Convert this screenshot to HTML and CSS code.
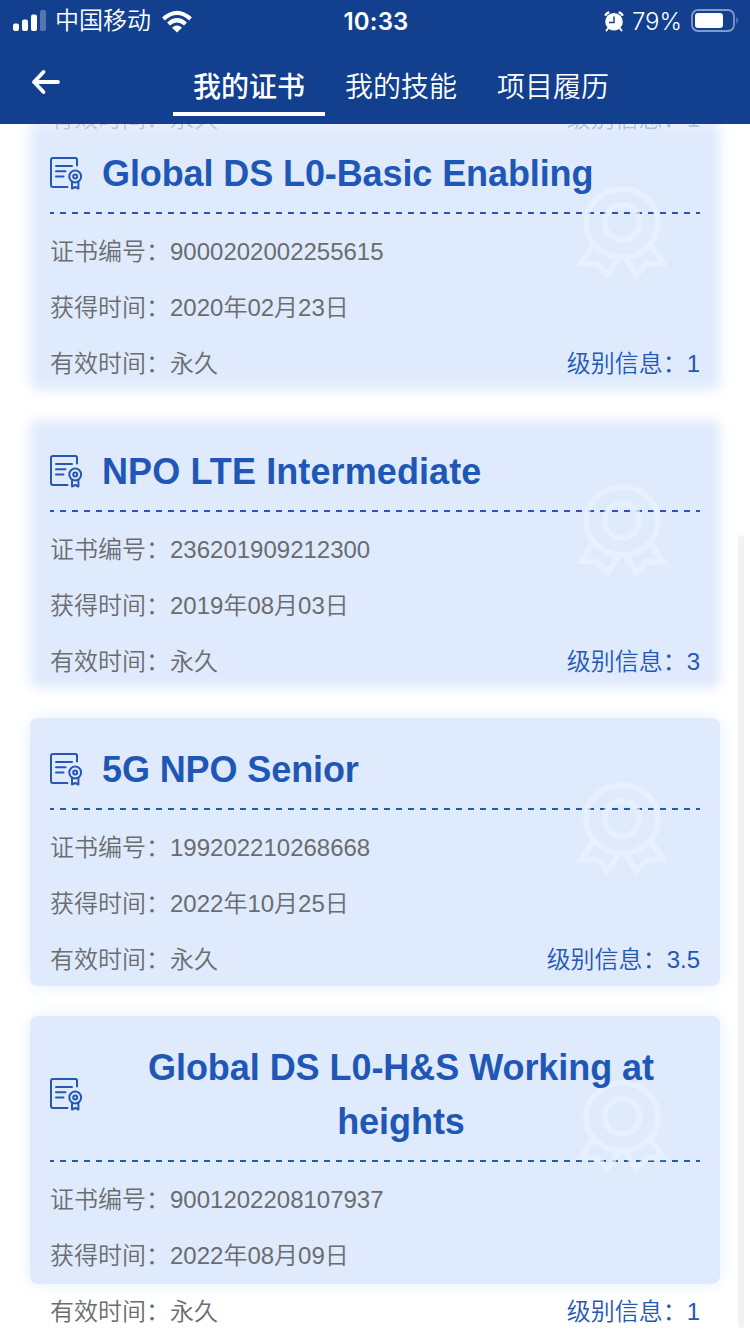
FILE: index.html
```html
<!DOCTYPE html>
<html lang="zh-CN">
<head>
<meta charset="utf-8">
<title>我的证书</title>
<link rel="stylesheet" href="styles.css">
</head>
<body>
<svg class="defs" width="0" height="0">
  <symbol id="cert" viewBox="0 0 34 34">
    <g fill="none" stroke="#2458b4" stroke-width="2" stroke-linecap="round" stroke-linejoin="round">
      <path d="M17.500 30H3Q1 30 1 28V3Q1 1 3 1H25.500Q27 1 27 2.500V8.500"/>
      <path d="M6 9H22M6 14.300H15.500M6 19.500H13.500"/>
      <circle cx="25.200" cy="19.500" r="5.900"/>
      <circle cx="25.200" cy="19.500" r="2"/>
      <path d="M22 25.500V31.500L25.200 30L28.400 31.500V25.500"/>
    </g>
  </symbol>
  <symbol id="medal" viewBox="0 0 96 96">
    <g fill="none" stroke="#eaf3ff" stroke-width="5.500">
      <ellipse cx="48" cy="37" rx="36" ry="34"/>
      <circle cx="48" cy="36.500" r="17.500"/>
      <path d="M20 58L7 77.500L23.500 78L33.500 89L46 70"/>
      <path d="M76 58L89 77.500L72.500 78L62.500 89L50 70"/>
    </g>
  </symbol>
</svg>
<header class="header">
  <div class="status">
    <div class="status-left">
      <svg width="34" height="22" viewBox="0 0 34 22"><g fill="#fff"><rect x="0" y="13.500" width="6" height="7.500" rx="2"/><rect x="9" y="9.500" width="6" height="11.500" rx="2"/><rect x="18" y="4.500" width="6" height="16.500" rx="2"/><rect x="27" y="0" width="6" height="21" rx="2" opacity=".28"/></g></svg>
      <span class="carrier">中国移动</span>
      <svg width="30" height="23" viewBox="0 0 30 23"><g fill="none" stroke="#fff" stroke-width="4.200"><path d="M1.500 9Q15-3.200 28.500 9"/><path d="M6.500 14Q15 6.500 23.500 14"/></g><path fill="#fff" d="M10 17.700Q15 13.500 20 17.700L15 22.500Z"/></svg>
    </div>
    <div class="clock">10:33</div>
    <div class="status-right">
      <svg width="20" height="21" viewBox="0 0 20 21"><circle cx="10" cy="10.800" r="8.800" fill="#fff"/><path d="M1.300 4.800Q2 2 5.300 1.300M18.700 4.800Q18 2 14.700 1.300" stroke="#fff" stroke-width="2.200" fill="none"/><path d="M4 17.500L2.500 19.500M16 17.500L17.500 19.500" stroke="#fff" stroke-width="2" stroke-linecap="round"/><path d="M10 5.500V11.500H5" fill="none" stroke="#12408f" stroke-width="1.500"/></svg>
      <span class="percent">79%</span>
      <svg width="48" height="24" viewBox="0 0 48 24"><rect x="1" y="1" width="42" height="21" rx="6" fill="none" stroke="#7f9bcb" stroke-width="1.800"/><rect x="4" y="4" width="28" height="15" rx="3" fill="#fff"/><path d="M45.500 8Q48 11.500 45.500 15Z" fill="#7f9bcb"/></svg>
    </div>
  </div>
  <nav class="nav">
    <svg class="back" width="30" height="26" viewBox="0 0 30 26"><path d="M12.500 3L3 13L12.500 23M3 13H27" fill="none" stroke="#fff" stroke-width="3.800" stroke-linecap="round" stroke-linejoin="round"/></svg>
    <div class="tabs">
      <a class="tab tab-active">我的证书</a>
      <a class="tab">我的技能</a>
      <a class="tab">项目履历</a>
    </div>
  </nav>
</header>
<main class="list">
  <div class="row row-hidden"><span>有效时间<i class="colon">：</i>永久</span><span class="level">级别信息<i class="colon">：</i>1</span></div>
  <section class="card card-soft">
    <div class="head"><svg class="cert"><use href="#cert"/></svg><h2 class="title title-tight">Global DS L0-Basic Enabling</h2></div>
    <div class="row"><span>证书编号<i class="colon">：</i>9000202002255615</span></div>
    <div class="row"><span>获得时间<i class="colon">：</i>2020年02月23日</span></div>
    <div class="row"><span>有效时间<i class="colon">：</i>永久</span><span class="level">级别信息<i class="colon">：</i>1</span></div>
    <svg class="medal"><use href="#medal"/></svg>
  </section>
  <section class="card card-soft">
    <div class="head"><svg class="cert"><use href="#cert"/></svg><h2 class="title title-loose">NPO LTE Intermediate</h2></div>
    <div class="row"><span>证书编号<i class="colon">：</i>236201909212300</span></div>
    <div class="row"><span>获得时间<i class="colon">：</i>2019年08月03日</span></div>
    <div class="row"><span>有效时间<i class="colon">：</i>永久</span><span class="level">级别信息<i class="colon">：</i>3</span></div>
    <svg class="medal"><use href="#medal"/></svg>
  </section>
  <section class="card">
    <div class="head"><svg class="cert"><use href="#cert"/></svg><h2 class="title title-tight">5G NPO Senior</h2></div>
    <div class="row"><span>证书编号<i class="colon">：</i>199202210268668</span></div>
    <div class="row"><span>获得时间<i class="colon">：</i>2022年10月25日</span></div>
    <div class="row"><span>有效时间<i class="colon">：</i>永久</span><span class="level">级别信息<i class="colon">：</i>3.5</span></div>
    <svg class="medal"><use href="#medal"/></svg>
  </section>
  <section class="card">
    <div class="head"><svg class="cert"><use href="#cert"/></svg><h2 class="title title-wrap">Global DS L0-H&amp;S Working at heights</h2></div>
    <div class="row"><span>证书编号<i class="colon">：</i>9001202208107937</span></div>
    <div class="row"><span>获得时间<i class="colon">：</i>2022年08月09日</span></div>
    <div class="row"><span>有效时间<i class="colon">：</i>永久</span><span class="level">级别信息<i class="colon">：</i>1</span></div>
    <svg class="medal"><use href="#medal"/></svg>
  </section>
  <div class="scrollbar"></div>
</main>
</body>
</html>
```
FILE: styles.css
```css
* { box-sizing: border-box; }
body {
  margin: 0;
  width: 750px;
  height: 1334px;
  overflow: hidden;
  display: flex;
  flex-direction: column;
  background: #fff;
  font-family: "Liberation Sans", "Noto Sans CJK SC", sans-serif;
  color: #6a6c70;
}
.defs { position: absolute; }
.header { height: 124px; flex: none; background: #12408f; color: #fff; }
.status {
  height: 40px;
  display: grid;
  grid-template-columns: 1fr auto 1fr;
  align-items: center;
  padding: 0 11px 0 13px;
}
.status svg { display: block; }
.status-left { display: flex; align-items: center; gap: 8px; }
.carrier { font-size: 24px; line-height: 40px; font-weight: 350; margin-right: 3px; }
.clock { font: 600 24px/40px Inter, sans-serif; letter-spacing: .2px; padding-top: 2px; }
.status-right { display: flex; align-items: center; justify-content: flex-end; gap: 9px; }
.percent { font: 350 24px/40px Inter, sans-serif; padding-top: 2px; margin: 0 0 0 -1px; }
.nav { height: 84px; display: flex; padding-left: 31px; }
.back { margin-top: 29px; }
.tabs { display: flex; margin-left: 112px; }
.tab {
  height: 76px;
  padding: 20px 20px 0;
  border-bottom: 4px solid transparent;
  font-size: 28px;
  line-height: 52px;
  padding-top: 22px;
  font-weight: 350;
}
.tab-active { border-bottom-color: #fff; font-weight: 500; }
.list {
  position: relative;
  height: 1210px;
  overflow: hidden;
  padding: 0 30px;
}
.row {
  height: 56px;
  display: flex;
  justify-content: space-between;
  font-size: 24px;
  line-height: 56px;
  font-weight: 350;
}
.row-hidden {
  position: relative;
  z-index: 1;
  margin: -33px 0 -25px;
  padding: 0 20px;
  opacity: .3;
}
.colon { font-style: normal; line-height: 1; }
.level { color: #2458b4; }
.card {
  position: relative;
  z-index: 0;
  height: 268px;
  margin-bottom: 30px;
  padding: 25px 20px 0;
}
.card::before {
  content: "";
  position: absolute;
  z-index: -1;
  inset: 0;
  border-radius: 8px;
  background: #dfeafc;
  box-shadow: 0 0 16px rgba(190, 216, 255, .4);
}
.card-soft::before { filter: blur(6px); box-shadow: none; }
.head {
  display: flex;
  align-items: center;
  margin-bottom: 10px;
  padding-bottom: 13px;
  background: repeating-linear-gradient(90deg, #2458b4 0 4px, transparent 4px 10px, #2458b4 10px 12px) 0 100% / 650px 2px no-repeat;
}
.cert { width: 34px; height: 34px; flex: none; margin-right: 18px; }
.title {
  position: relative;
  z-index: 2;
  margin: 0;
  font-size: 36px;
  line-height: 54px;
  font-weight: 700;
  color: #1f57b7;
  white-space: nowrap;
}
.title-tight { letter-spacing: -.1px; }
.title-loose { letter-spacing: .1px; }
.title-wrap { white-space: normal; flex: 1; text-align: center; letter-spacing: -.05px; }
.medal {
  position: absolute;
  z-index: 1;
  right: 50px;
  top: 64px;
  width: 96px;
  height: 96px;
  opacity: .75;
}
.scrollbar {
  position: absolute;
  right: 6px;
  top: 411px;
  width: 6px;
  height: 793px;
  border-radius: 3px;
  background: #f2f2f2;
}
```
